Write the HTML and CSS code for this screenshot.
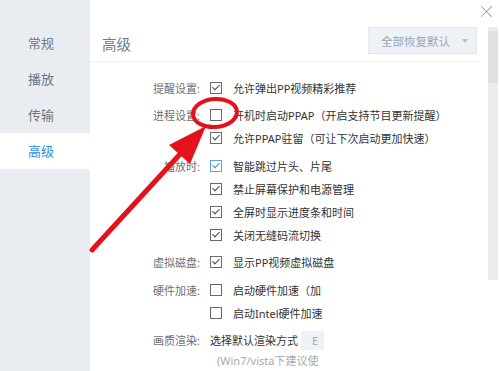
FILE: index.html
```html
<!DOCTYPE html>
<html lang="zh-CN">
<head>
    <meta charset="UTF-8">
    <title>设置 - 高级</title>
    <link rel="stylesheet" href="styles.css">
</head>
<body>
    <div class="window">
        <aside class="sidebar">
            <div class="nav-item">常规</div>
            <div class="nav-item">播放</div>
            <div class="nav-item">传输</div>
            <div class="nav-item active">高级</div>
        </aside>

        <main class="main">
            <div class="titlebar"><span class="close"></span></div>
            <div class="main-body">
                <section class="content">
                    <div class="header">
                        <h2>高级</h2>
                        <button class="reset">全部恢复默认<span class="caret"></span></button>
                    </div>

                    <div class="settings">
                        <div class="group">
                            <div class="row"><span class="label">提醒设置:</span><span class="check on"></span><span class="text">允许弹出PP视频精彩推荐</span></div>
                        </div>
                        <div class="group">
                            <div class="row"><span class="label">进程设置:</span><span class="check"></span><span class="text">开机时启动PPAP（开启支持节目更新提醒）</span></div>
                            <div class="row"><span class="label"></span><span class="check on"></span><span class="text">允许PPAP驻留（可让下次启动更加快速）</span></div>
                        </div>
                        <div class="group">
                            <div class="row"><span class="label">播放时:</span><span class="check on blue"></span><span class="text">智能跳过片头、片尾</span></div>
                            <div class="row"><span class="label"></span><span class="check on"></span><span class="text">禁止屏幕保护和电源管理</span></div>
                            <div class="row"><span class="label"></span><span class="check on"></span><span class="text">全屏时显示进度条和时间</span></div>
                            <div class="row"><span class="label"></span><span class="check on"></span><span class="text">关闭无缝码流切换</span></div>
                        </div>
                        <div class="group">
                            <div class="row"><span class="label">虚拟磁盘:</span><span class="check on"></span><span class="text">显示PP视频虚拟磁盘</span></div>
                        </div>

                        <!-- the lower part of the panel is cut off on the right -->
                        <div class="clip">
                            <div class="group">
                                <div class="row"><span class="label">硬件加速:</span><span class="check"></span><span class="text">启动硬件加速（加</span></div>
                                <div class="row"><span class="label"></span><span class="check"></span><span class="text">启动Intel硬件加速</span></div>
                            </div>
                            <div class="group">
                                <div class="row"><span class="label">画质渲染:</span><span class="render">选择默认渲染方式<span class="select">E</span></span></div>
                                <div class="note">(Win7/vista下建议使</div>
                            </div>
                        </div>
                    </div>
                </section>
                <div class="scrollbar"><div class="thumb"></div></div>
            </div>
        </main>

        <svg class="annotation" width="500" height="371" viewBox="0 0 500 371">
            <ellipse cx="215" cy="113" rx="22" ry="14" fill="none" stroke="#e5121b" stroke-width="4" transform="rotate(-4 215 113)"/>
            <line x1="92" y1="250" x2="182" y2="152" stroke="#e5121b" stroke-width="5" stroke-linecap="round"/>
            <polygon points="206,126 190,164 169,145" fill="#e5121b"/>
        </svg>
    </div>
</body>
</html>
```

FILE: styles.css
```css
body {
    margin: 0;
    font-family: "Noto Sans", "Noto Sans CJK SC", sans-serif;
    background: #fff;
}
.window {
    position: relative;
    width: 500px;
    height: 371px;
    display: flex;
    overflow: hidden;
}
.sidebar {
    width: 90px;
    background-color: #e9edf2;
    padding-top: 25px;
    box-sizing: border-box;
}
.nav-item {
    height: 36px;
    line-height: 36px;
    padding-left: 28px;
    font-size: 13px;
    color: #6e7784;
}
.nav-item.active {
    background-color: #fff;
    color: #2b8fe0;
}
.main {
    flex: 1;
    display: flex;
    flex-direction: column;
    min-height: 0;
}
.titlebar {
    height: 27px;
    flex-shrink: 0;
    display: flex;
    justify-content: flex-end;
    align-items: flex-start;
}
.close {
    position: relative;
    width: 12px;
    height: 12px;
    margin: 5px 7px 0 0;
}
.close::before,
.close::after {
    content: "";
    position: absolute;
    left: 5px;
    top: -1px;
    width: 1.2px;
    height: 15px;
    background: #a0a4a9;
    transform: rotate(45deg);
}
.close::after {
    transform: rotate(-45deg);
}
.main-body {
    flex: 1;
    min-height: 0;
    display: flex;
    align-items: flex-start;
}
.content {
    width: 388px;
    flex-shrink: 0;
}
.header {
    height: 34px;
    display: flex;
    justify-content: space-between;
    align-items: flex-start;
    border-bottom: 1px solid #eef0f3;
    padding-left: 12px;
    padding-right: 1px;
}
.header h2 {
    margin: 7px 0 0;
    font-size: 14.5px;
    line-height: 20px;
    font-weight: normal;
    color: #6f7c8c;
}
.reset {
    width: 109px;
    height: 27px;
    border: 1px solid #e4e8ed;
    background-color: #eef1f5;
    color: #9aa5b3;
    font-family: inherit;
    font-size: 11.5px;
    padding: 0 0 0 12px;
    display: flex;
    align-items: center;
    cursor: pointer;
}
.caret {
    margin-left: 12px;
    width: 0;
    height: 0;
    border-left: 3.5px solid transparent;
    border-right: 3.5px solid transparent;
    border-top: 4px solid #b3c2d4;
}
.settings {
    padding-top: 14px;
    font-size: 11px;
}
.group {
    margin-bottom: 4.5px;
}
.row {
    height: 23px;
    display: flex;
    align-items: center;
    white-space: nowrap;
}
.label {
    width: 110px;
    flex-shrink: 0;
    text-align: right;
    color: #6f6f6f;
}
.check {
    position: relative;
    width: 10px;
    height: 10px;
    border: 1px solid #6a6a6a;
    margin-left: 10px;
    margin-right: 11px;
    flex-shrink: 0;
}
.check.on::after {
    content: "";
    position: absolute;
    left: 3px;
    top: 0;
    width: 3px;
    height: 6px;
    border: solid #4a4a4a;
    border-width: 0 1.4px 1.4px 0;
    transform: rotate(45deg);
}
.check.blue {
    border-color: #5aa2e6;
}
.check.blue::after {
    border-color: #3d8fdc;
}
.text {
    color: #333;
}
.clip {
    width: 234px;
    overflow: hidden;
}
.render {
    margin-left: 10px;
    color: #333;
    display: flex;
    align-items: center;
}
.select {
    margin-left: 3px;
    width: 40px;
    height: 19px;
    line-height: 19px;
    background-color: #eef1f5;
    color: #9aa5b3;
    padding-left: 11px;
    box-sizing: border-box;
}
.note {
    white-space: nowrap;
    color: #aaaaaa;
    padding-left: 127px;
    line-height: 18px;
}
.scrollbar {
    width: 10px;
    height: 253px;
    margin-left: 10px;
    flex-shrink: 0;
    background-color: #ececec;
}
.thumb {
    height: 52px;
    margin-top: 4px;
    background-color: #e0e0e0;
}
.annotation {
    position: absolute;
    left: 0;
    top: 0;
    pointer-events: none;
}
```
